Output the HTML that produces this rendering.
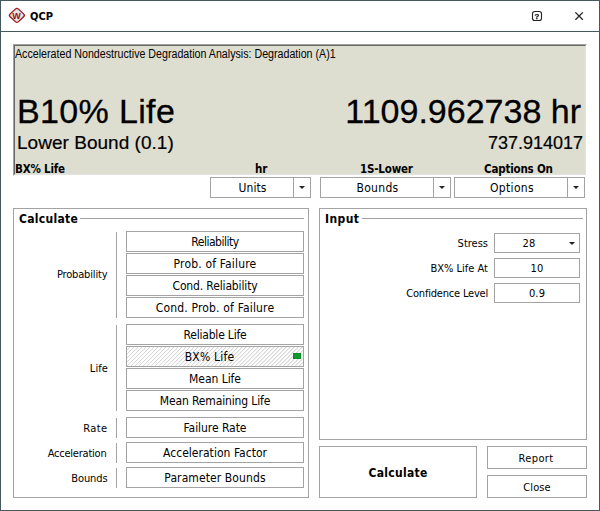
<!DOCTYPE html>
<html><head><meta charset="utf-8">
<style>
*{box-sizing:border-box;margin:0;padding:0}
html,body{width:600px;height:511px;overflow:hidden;background:#fff}
body{font-family:"DejaVu Sans Condensed","DejaVu Sans","Liberation Sans",sans-serif;font-size:12px;color:#000;position:relative}
.win{position:absolute;left:0;top:0;width:600px;height:511px;border:1px solid #44585e;background:#fff}
.abs{position:absolute}
.title{position:absolute;left:30px;top:10px;font-weight:bold;font-size:11px;line-height:14px}
.tsep{position:absolute;left:0;top:31px;width:600px;height:1px;background:#44585e}
.panel{position:absolute;left:13px;top:44px;width:574px;height:132px;border:1px solid #fff;border-top-color:#a0a0a0;border-left-color:#a0a0a0}
.panel>div{width:100%;height:100%;background:#deded0;border:1px solid #e3e3e3;border-top-color:#696969;border-left-color:#696969}
.ar{font-family:"Liberation Sans",sans-serif;white-space:nowrap}
.btn{position:absolute;border:1px solid #a3a3a3;background:#fff;text-align:center;font-size:12px;line-height:21px;height:21px;letter-spacing:0.12px}
.lbl{position:absolute;text-align:right;font-size:11px;line-height:13px;color:#000;white-space:nowrap}
.grp{position:absolute;border:1px solid #a3a3a3}
.vbar{position:absolute;width:1px;background:#a3a3a3}
.cap{position:absolute;font-weight:bold;font-size:11.5px;letter-spacing:-0.2px;white-space:nowrap;line-height:14px}
.arr{position:absolute;border:3px solid transparent;border-top:3px solid #222;border-bottom:0}
</style></head><body>
<div class="win"></div>
<svg class="abs" style="left:0;top:0" width="40" height="30" viewBox="0 0 40 30"><g transform="translate(16.9,15.35) scale(1,0.93) rotate(45)"><rect x="-5.85" y="-5.85" width="11.7" height="11.7" rx="2.2" fill="#dfe5ea" stroke="#a31818" stroke-width="1.35"/></g><text x="16.6" y="18.9" text-anchor="middle" font-family="Liberation Sans, sans-serif" font-weight="bold" font-size="9" fill="#9c1010">W</text></svg>
<div class="title">QCP</div>
<svg class="abs" style="left:530px;top:9px;will-change:transform" width="14" height="14" viewBox="0 0 14 14"><rect x="2.5" y="2.5" width="9" height="9" rx="2.3" fill="none" stroke="#222" stroke-width="1.1"/><text x="7" y="10" text-anchor="middle" font-family="Liberation Sans, sans-serif" font-weight="bold" font-size="8" fill="#111" stroke="#111" stroke-width="0.25">?</text></svg>
<svg class="abs" style="left:574px;top:11px" width="11" height="11" viewBox="0 0 11 11"><path d="M1.4 1.4 L8.8 8.8 M8.8 1.4 L1.4 8.8" stroke="#222" stroke-width="1.3" fill="none"/></svg>
<div class="tsep"></div>

<div class="panel"><div></div></div>
<div id="t0" class="abs ar" style="left:15px;top:46px;font-size:12.5px;line-height:16px;transform:scaleX(0.853);transform-origin:0 0">Accelerated Nondestructive Degradation Analysis: Degradation (A)1</div>
<div id="t1" class="abs ar" style="left:17px;top:92px;font-size:34px;line-height:38px;letter-spacing:0.35px;-webkit-text-stroke:0.3px #000">B10% Life</div>
<div id="t2" class="abs ar" style="right:19px;top:92px;font-size:34px;line-height:38px;-webkit-text-stroke:0.3px #000">1109.962738 hr</div>
<div id="t3" class="abs ar" style="left:17px;top:131px;font-size:19px;line-height:24px;letter-spacing:0.03px;-webkit-text-stroke:0.2px #000">Lower Bound (0.1)</div>
<div id="t4" class="abs ar" style="right:17px;top:131px;font-size:18px;line-height:24px;-webkit-text-stroke:0.2px #000">737.914017</div>
<div class="cap" style="left:15px;top:162px">BX% Life</div>
<div class="cap" style="left:255px;top:162px">hr</div>
<div class="cap" style="left:360px;top:162px">1S-Lower</div>
<div class="cap" style="left:484px;top:162px">Captions On</div>

<!-- dropdown buttons -->
<div class="btn" style="left:210px;top:177px;width:101px"><span class="abs" style="left:0;width:83px">Units</span><span class="vbar" style="left:82px;top:0;height:19px"></span><span class="arr" style="left:88px;top:8px"></span></div>
<div class="btn" style="left:320px;top:177px;width:131px"><span class="abs" style="left:0;width:113px;letter-spacing:0.3px">Bounds</span><span class="vbar" style="left:112px;top:0;height:19px"></span><span class="arr" style="left:118px;top:8px"></span></div>
<div class="btn" style="left:454px;top:177px;width:131px"><span class="abs" style="left:0;width:114px;letter-spacing:0.32px">Options</span><span class="vbar" style="left:112px;top:0;height:19px"></span><span class="arr" style="left:118px;top:8px"></span></div>

<!-- Calculate group -->
<div class="grp" style="left:13px;top:208px;width:296px;height:290px"></div>
<div class="abs" style="left:19px;top:212px;font-weight:bold;font-size:12px;letter-spacing:0.3px;line-height:14px">Calculate</div>
<div class="abs" style="left:80px;top:218px;width:224px;height:1px;background:#a3a3a3"></div>

<div class="vbar" style="left:116px;top:232px;height:86px"></div>
<div class="vbar" style="left:116px;top:325px;height:86px"></div>
<div class="vbar" style="left:116px;top:418px;height:20px"></div>
<div class="vbar" style="left:116px;top:443px;height:20px"></div>
<div class="vbar" style="left:116px;top:468px;height:20px"></div>

<div class="lbl" style="left:20px;width:87.5px;top:268px;letter-spacing:-0.15px">Probability</div>
<div class="lbl" style="left:20px;width:88px;top:362px;letter-spacing:0.1px">Life</div>
<div class="lbl" style="left:20px;width:87.5px;top:422px;letter-spacing:0.4px">Rate</div>
<div class="lbl" style="left:20px;width:86.5px;top:447px;letter-spacing:-0.22px">Acceleration</div>
<div class="lbl" style="left:20px;width:87.5px;top:472px;letter-spacing:-0.1px">Bounds</div>

<div class="btn" style="left:126px;top:231px;width:178px;letter-spacing:-0.47px">Reliability</div>
<div class="btn" style="left:126px;top:253px;width:178px;letter-spacing:0.18px">Prob. of Failure</div>
<div class="btn" style="left:126px;top:275px;width:178px;letter-spacing:-0.14px">Cond. Reliability</div>
<div class="btn" style="left:126px;top:297px;width:178px;letter-spacing:0.17px">Cond. Prob. of Failure</div>
<div class="btn" style="left:126px;top:324px;width:178px;letter-spacing:-0.19px">Reliable Life</div>
<div class="btn" style="left:126px;top:346px;width:178px;letter-spacing:0.21px;padding-right:11px;background:repeating-linear-gradient(135deg,#fff 0,#fff 1.6px,#d7d7d7 1.75px,#d7d7d7 2.7px,#fff 2.83px)">BX% Life<span class="abs" style="left:166px;top:6px;width:8px;height:6px;background:#109a2e;border:1px solid #0c8a28"></span></div>
<div class="btn" style="left:126px;top:368px;width:178px;letter-spacing:-0.04px">Mean Life</div>
<div class="btn" style="left:126px;top:390px;width:178px;letter-spacing:-0.13px">Mean Remaining Life</div>
<div class="btn" style="left:126px;top:417px;width:178px;letter-spacing:-0.05px">Failure Rate</div>
<div class="btn" style="left:126px;top:442px;width:178px;letter-spacing:0.03px">Acceleration Factor</div>
<div class="btn" style="left:126px;top:467px;width:178px;letter-spacing:0.10px">Parameter Bounds</div>

<!-- Input group -->
<div class="grp" style="left:319px;top:208px;width:268px;height:232px"></div>
<div class="abs" style="left:325px;top:212px;font-weight:bold;font-size:12px;letter-spacing:0.4px;line-height:14px">Input</div>
<div class="abs" style="left:362px;top:218px;width:221px;height:1px;background:#a3a3a3"></div>

<div class="lbl" style="left:380px;width:108px;top:237px">Stress</div>
<div class="lbl" style="left:380px;width:108px;top:262px">BX% Life At</div>
<div class="lbl" style="left:380px;width:108px;top:287px;letter-spacing:-0.2px">Confidence Level</div>
<div class="btn" style="left:494px;top:233px;width:86px;height:20px;line-height:20px;font-size:11px"><span class="abs" style="left:0;width:68px">28</span><span class="arr" style="left:74px;top:8px"></span></div>
<div class="btn" style="left:494px;top:258px;width:86px;height:20px;line-height:20px;font-size:11px">10</div>
<div class="btn" style="left:494px;top:283px;width:86px;height:20px;line-height:20px;font-size:11px">0.9</div>

<div class="btn" style="left:319px;top:446px;width:158px;height:52px;line-height:52px;font-weight:bold;font-size:12px;letter-spacing:0.3px">Calculate</div>
<div class="btn" style="left:487px;top:446px;width:100px;height:23px;line-height:23px;font-size:11px;letter-spacing:0.4px;padding-right:2px">Report</div>
<div class="btn" style="left:487px;top:475px;width:100px;height:23px;line-height:23px;font-size:11px;letter-spacing:0.07px">Close</div>
</body></html>
